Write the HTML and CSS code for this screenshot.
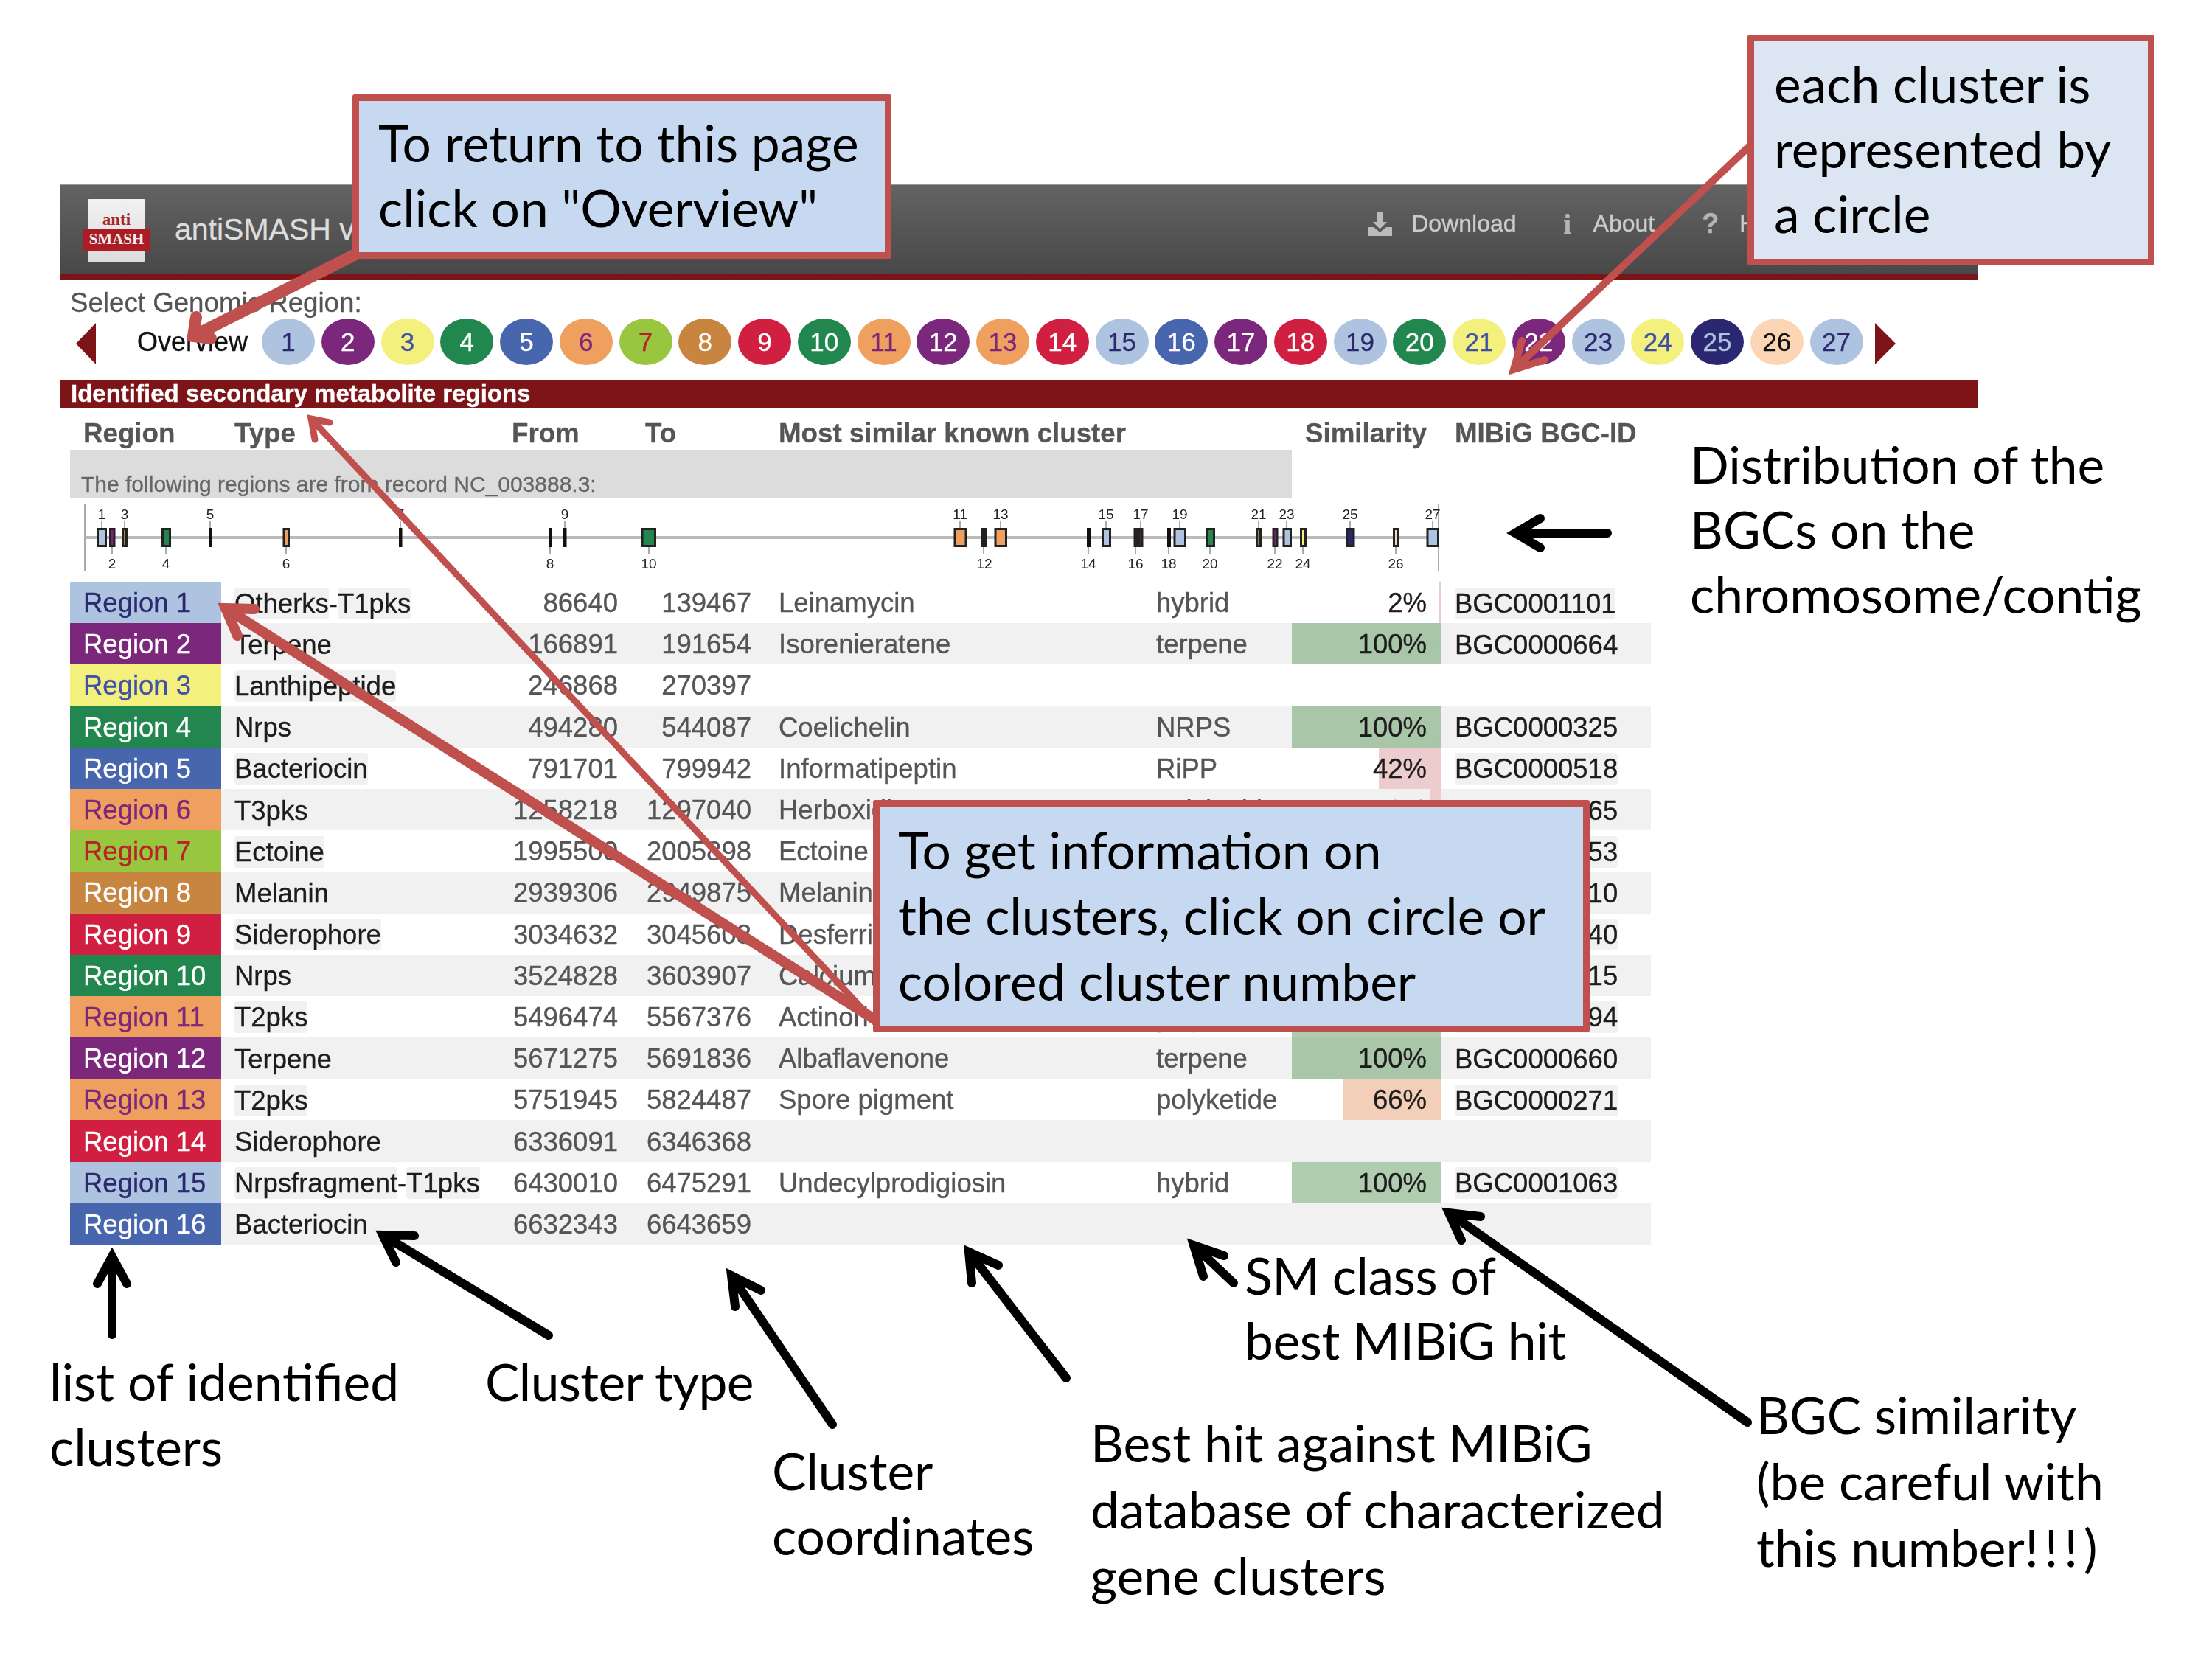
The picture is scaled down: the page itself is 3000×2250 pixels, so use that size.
FILE: index.html
```html
<!doctype html>
<html lang="en">
<head>
<title>antiSMASH overview</title>
<link rel="stylesheet" href="styles.css">
</head>
<body>
<div class="slide">

  <!-- the screenshot -->
  <div class="shot">
    <div class="navbar">
      <svg class="logo" width="92" height="86" viewBox="0 0 92 86">
        <defs>
          <linearGradient id="paper" x1="0" y1="0" x2="0" y2="1">
            <stop offset="0" stop-color="#f1f1f1"/>
            <stop offset="1" stop-color="#dcdcdc"/>
          </linearGradient>
        </defs>
        <rect x="7" y="0" width="78" height="85" rx="2" fill="url(#paper)"/>
        <rect x="0" y="40" width="92" height="30" rx="3" fill="#ad1c25"/>
        <text x="46" y="35" class="logo-anti">anti</text>
        <text x="46" y="61" class="logo-smash">SMASH</text>
      </svg>
      <div class="brand">antiSMASH v</div>
      <div class="nav-items">
        <div class="nav-item dl">
          <svg width="33" height="32" viewBox="0 0 33 32">
            <path d="M13 0h7v13h6l-9.500 9.500L7 13h6z" fill="#bbb"/>
            <path d="M0 20h8l8.500 7 8.500-7h8v12H0z" fill="#bbb"/>
          </svg>
          <span>Download</span>
        </div>
        <div class="nav-item info"><b>i</b><span>About</span></div>
        <div class="nav-item help"><b>?</b><span>Help</span></div>
      </div>
    </div>

    <div class="select-label">Select Genomic Region:</div>
    <div class="region-nav">
      <div class="arrow-left"></div>
      <div class="overview">Overview</div>
      <div class="circles">
        <a class="c-other">1</a><a class="c-terpene">2</a><a class="c-lanthi">3</a><a class="c-nrps">4</a><a class="c-bact">5</a><a class="c-pks">6</a><a class="c-ectoine">7</a><a class="c-melanin">8</a><a class="c-sidero">9</a>
        <a class="c-nrps">10</a><a class="c-pks">11</a><a class="c-terpene">12</a><a class="c-pks">13</a><a class="c-sidero">14</a><a class="c-other">15</a><a class="c-bact">16</a><a class="c-terpene">17</a><a class="c-sidero">18</a>
        <a class="c-other">19</a><a class="c-nrps">20</a><a class="c-lanthi">21</a><a class="c-terpene">22</a><a class="c-other">23</a><a class="c-lanthi">24</a><a class="c-navy">25</a><a class="c-peach">26</a><a class="c-other">27</a>
      </div>
      <div class="arrow-right"></div>
    </div>

    <div class="title-bar">Identified secondary metabolite regions</div>

    <table class="regions">
      <colgroup>
        <col class="w-region"><col class="w-type"><col class="w-from"><col class="w-to"><col class="w-name"><col class="w-class"><col class="w-sim"><col class="w-bgc">
      </colgroup>
      <thead>
        <tr><th>Region</th><th>Type</th><th>From</th><th>To</th><th colspan="2">Most similar known cluster</th><th>Similarity</th><th>MIBiG BGC-ID</th></tr>
      </thead>
      <tbody class="intro">
        <tr><td colspan="6"><div class="record">The following regions are from record NC_003888.3:</div></td><td colspan="2"></td></tr>
        <tr><td colspan="8">
          <svg class="chromo" width="1900" height="113" viewBox="95 676 1900 113">
            <line x1="115" y1="729" x2="1952" y2="729" class="axis"/>
            <line x1="115" y1="683" x2="115" y2="775" class="end"/>
            <line x1="1951" y1="683" x2="1951" y2="775" class="end"/>

            <g><line x1="138" y1="706" x2="138" y2="716"/><rect x="132.500" y="717.500" width="11" height="23" class="f-other"/><text x="138" y="704">1</text></g>
            <g><line x1="152" y1="742" x2="152" y2="752"/><rect x="149.500" y="717.500" width="5.500" height="23" class="f-terpene"/><text x="152" y="771">2</text></g>
            <g><line x1="169" y1="706" x2="169" y2="716"/><rect x="167" y="717.500" width="4.500" height="23" class="f-lanthi"/><text x="169" y="704">3</text></g>
            <g><line x1="225" y1="742" x2="225" y2="752"/><rect x="220.500" y="717.500" width="10" height="23" class="f-nrps"/><text x="225" y="771">4</text></g>
            <g><line x1="285" y1="706" x2="285" y2="716"/><rect x="283" y="716" width="4" height="26" class="f-black"/><text x="285" y="704">5</text></g>
            <g><line x1="388" y1="742" x2="388" y2="752"/><rect x="385" y="717.500" width="6.500" height="23" class="f-pks"/><text x="388" y="771">6</text></g>
            <g><line x1="543" y1="706" x2="543" y2="716"/><rect x="541" y="716" width="4.500" height="26" class="f-black"/><text x="543" y="704">7</text></g>
            <g><line x1="746" y1="742" x2="746" y2="752"/><rect x="744" y="716" width="4.500" height="26" class="f-black"/><text x="746" y="771">8</text></g>
            <g><line x1="766" y1="706" x2="766" y2="716"/><rect x="764" y="716" width="4.500" height="26" class="f-black"/><text x="766" y="704">9</text></g>
            <g><line x1="880" y1="742" x2="880" y2="752"/><rect x="871" y="717.500" width="17.500" height="23" class="f-nrps"/><text x="880" y="771">10</text></g>
            <g><line x1="1302" y1="706" x2="1302" y2="716"/><rect x="1295" y="717.500" width="15" height="23" class="f-pks"/><text x="1302" y="704">11</text></g>
            <g><line x1="1334" y1="742" x2="1334" y2="752"/><rect x="1332.500" y="717.500" width="4" height="23" class="f-terpene"/><text x="1335" y="771">12</text></g>
            <g><line x1="1357" y1="706" x2="1357" y2="716"/><rect x="1350" y="717.500" width="14.500" height="23" class="f-pks"/><text x="1357" y="704">13</text></g>
            <g><line x1="1476" y1="742" x2="1476" y2="752"/><rect x="1474" y="716" width="5" height="26" class="f-black"/><text x="1476" y="771">14</text></g>
            <g><line x1="1500" y1="706" x2="1500" y2="716"/><rect x="1495.500" y="717.500" width="10" height="23" class="f-other"/><text x="1500" y="704">15</text></g>
            <g><line x1="1540" y1="742" x2="1540" y2="752"/><rect x="1539" y="717.500" width="3" height="23" class="f-bact"/><text x="1540" y="771">16</text></g>
            <g><line x1="1547" y1="706" x2="1547" y2="716"/><rect x="1545" y="717.500" width="4" height="23" class="f-terpene"/><text x="1547" y="704">17</text></g>
            <g><line x1="1585" y1="742" x2="1585" y2="752"/><rect x="1583" y="716" width="5" height="26" class="f-black"/><text x="1585" y="771">18</text></g>
            <g><line x1="1600" y1="706" x2="1600" y2="716"/><rect x="1593" y="717.500" width="14.500" height="23" class="f-other"/><text x="1600" y="704">19</text></g>
            <g><line x1="1641" y1="742" x2="1641" y2="752"/><rect x="1637" y="717.500" width="9.500" height="23" class="f-nrps"/><text x="1641" y="771">20</text></g>
            <g><line x1="1707" y1="706" x2="1707" y2="716"/><rect x="1705" y="717.500" width="4.500" height="23" class="f-lanthi"/><text x="1707" y="704">21</text></g>
            <g><line x1="1729" y1="742" x2="1729" y2="752"/><rect x="1727" y="717.500" width="5" height="23" class="f-terpene"/><text x="1729" y="771">22</text></g>
            <g><line x1="1745" y1="706" x2="1745" y2="716"/><rect x="1741" y="717.500" width="9.500" height="23" class="f-other"/><text x="1745" y="704">23</text></g>
            <g><line x1="1767" y1="742" x2="1767" y2="752"/><rect x="1764.500" y="717.500" width="6" height="23" class="f-lanthi"/><text x="1767" y="771">24</text></g>
            <g><line x1="1831" y1="706" x2="1831" y2="716"/><rect x="1827" y="717.500" width="9" height="23" class="f-navy"/><text x="1831" y="704">25</text></g>
            <g><line x1="1893" y1="742" x2="1893" y2="752"/><rect x="1890.500" y="717.500" width="5" height="23" class="f-peach"/><text x="1893" y="771">26</text></g>
            <g><line x1="1943" y1="706" x2="1943" y2="716"/><rect x="1936" y="717.500" width="14.500" height="23" class="f-other"/><text x="1943" y="704">27</text></g>
          </svg>
        </td></tr>
      </tbody>
      <tbody class="rows">
        <tr><td class="c-other">Region 1</td><td class="type"><span class="tag">Otherks</span>-<span class="tag">T1pks</span></td><td class="num">86640</td><td class="num">139467</td><td>Leinamycin</td><td>hybrid</td><td class="sim low" style="--pct:2%">2%</td><td class="bgc"><span class="tag">BGC0001101</span></td></tr>
        <tr><td class="c-terpene">Region 2</td><td class="type"><span class="tag">Terpene</span></td><td class="num">166891</td><td class="num">191654</td><td>Isorenieratene</td><td>terpene</td><td class="sim high" style="--pct:100%">100%</td><td class="bgc"><span class="tag">BGC0000664</span></td></tr>
        <tr><td class="c-lanthi">Region 3</td><td class="type"><span class="tag">Lanthipeptide</span></td><td class="num">246868</td><td class="num">270397</td><td></td><td></td><td class="sim"></td><td class="bgc"></td></tr>
        <tr><td class="c-nrps">Region 4</td><td class="type"><span class="tag">Nrps</span></td><td class="num">494280</td><td class="num">544087</td><td>Coelichelin</td><td>NRPS</td><td class="sim high" style="--pct:100%">100%</td><td class="bgc"><span class="tag">BGC0000325</span></td></tr>
        <tr><td class="c-bact">Region 5</td><td class="type"><span class="tag">Bacteriocin</span></td><td class="num">791701</td><td class="num">799942</td><td>Informatipeptin</td><td>RiPP</td><td class="sim low" style="--pct:42%">42%</td><td class="bgc"><span class="tag">BGC0000518</span></td></tr>
        <tr><td class="c-pks">Region 6</td><td class="type"><span class="tag">T3pks</span></td><td class="num">1258218</td><td class="num">1297040</td><td>Herboxidiene</td><td>polyketide</td><td class="sim low" style="--pct:8%">8%</td><td class="bgc"><span class="tag">BGC0001065</span></td></tr>
        <tr><td class="c-ectoine">Region 7</td><td class="type"><span class="tag">Ectoine</span></td><td class="num">1995500</td><td class="num">2005898</td><td>Ectoine</td><td></td><td class="sim high" style="--pct:100%"></td><td class="bgc"><span class="tag">BGC0000853</span></td></tr>
        <tr><td class="c-melanin">Region 8</td><td class="type"><span class="tag">Melanin</span></td><td class="num">2939306</td><td class="num">2949875</td><td>Melanin</td><td></td><td class="sim high" style="--pct:100%"></td><td class="bgc"><span class="tag">BGC0000910</span></td></tr>
        <tr><td class="c-sidero">Region 9</td><td class="type"><span class="tag">Siderophore</span></td><td class="num">3034632</td><td class="num">3045608</td><td>Desferri</td><td></td><td class="sim high" style="--pct:100%"></td><td class="bgc"><span class="tag">BGC0000940</span></td></tr>
        <tr><td class="c-nrps">Region 10</td><td class="type"><span class="tag">Nrps</span></td><td class="num">3524828</td><td class="num">3603907</td><td>Calcium</td><td></td><td class="sim high" style="--pct:100%"></td><td class="bgc"><span class="tag">BGC0000315</span></td></tr>
        <tr><td class="c-pks">Region 11</td><td class="type"><span class="tag">T2pks</span></td><td class="num">5496474</td><td class="num">5567376</td><td>Actinorhodin</td><td>polyketide</td><td class="sim high" style="--pct:100%"></td><td class="bgc"><span class="tag">BGC0000194</span></td></tr>
        <tr><td class="c-terpene">Region 12</td><td class="type"><span class="tag">Terpene</span></td><td class="num">5671275</td><td class="num">5691836</td><td>Albaflavenone</td><td>terpene</td><td class="sim high" style="--pct:100%">100%</td><td class="bgc"><span class="tag">BGC0000660</span></td></tr>
        <tr><td class="c-pks">Region 13</td><td class="type"><span class="tag">T2pks</span></td><td class="num">5751945</td><td class="num">5824487</td><td>Spore pigment</td><td>polyketide</td><td class="sim mid" style="--pct:66%">66%</td><td class="bgc"><span class="tag">BGC0000271</span></td></tr>
        <tr><td class="c-sidero">Region 14</td><td class="type"><span class="tag">Siderophore</span></td><td class="num">6336091</td><td class="num">6346368</td><td></td><td></td><td class="sim"></td><td class="bgc"></td></tr>
        <tr><td class="c-other">Region 15</td><td class="type"><span class="tag">Nrpsfragment</span>-<span class="tag">T1pks</span></td><td class="num">6430010</td><td class="num">6475291</td><td>Undecylprodigiosin</td><td>hybrid</td><td class="sim high" style="--pct:100%">100%</td><td class="bgc"><span class="tag">BGC0001063</span></td></tr>
        <tr><td class="c-bact">Region 16</td><td class="type"><span class="tag">Bacteriocin</span></td><td class="num">6632343</td><td class="num">6643659</td><td></td><td></td><td class="sim"></td><td class="bgc"></td></tr>
      </tbody>
    </table>
  </div>

  <!-- arrows drawn over the screenshot -->
  <svg class="arrows" width="3000" height="2250" viewBox="0 0 3000 2250">
    <g class="ar-black">
      <path d="M2180 723H2055M2089 703L2055 723L2089 743"/>
      <path d="M152 1810V1704M132 1741L152 1704L172 1741"/>
      <path d="M744 1811L519 1675M562 1676L519 1675L537 1712"/>
      <path d="M1129 1932L992 1730M1032 1750L992 1730L997 1772"/>
      <path d="M1446 1869L1314 1698M1354 1716L1314 1698L1318 1740"/>
      <path d="M1673 1740L1619 1689M1660 1703L1619 1689L1632 1731"/>
      <path d="M2370 1929L1965 1645M2008 1650L1965 1645L1982 1682"/>
    </g>
    <g class="ar-red">
      <path class="w16" d="M480 346L262 456M286 459L262 456L266 430"/>
      <path class="w10" d="M2375 196L2053 501M2095 488L2053 501L2064 462"/>
      <path class="w9" d="M1190 1390L422 568M447 573L422 568L427 596"/>
      <path class="w14" d="M1190 1385L306 825M345 826L306 825L322 862"/>
    </g>
  </svg>

  <div class="callout c1">To return to this page<br>click on "Overview"</div>
  <div class="callout c2">each cluster is<br>represented by<br>a circle</div>
  <div class="callout c3">To get information on<br>the clusters, click on circle or<br>colored cluster number</div>

  <div class="note n-dist">Distribution of the<br>BGCs on the<br>chromosome/contig</div>
  <div class="note n-list">list of identified<br>clusters</div>
  <div class="note n-type">Cluster type</div>
  <div class="note n-coord">Cluster<br>coordinates</div>
  <div class="note n-best">Best hit against MIBiG<br>database of characterized<br>gene clusters</div>
  <div class="note n-class">SM class of<br>best MIBiG hit</div>
  <div class="note n-sim">BGC similarity<br>(be careful with<br>this number<span class="bangs">!!!</span>)</div>
</div>
</body>
</html>
```

FILE: styles.css
```css
BODY {
    margin: 0;
    background: #fff;
}
.slide {
    position: relative;
    width: 3000px;
    height: 2250px;
    overflow: hidden;
}

/* screenshot */
.shot {
    box-sizing: border-box;
    width: 2682px;
    padding: 250px 0 0 82px;
    font-family: "Liberation Sans", Arial, sans-serif;
    font-size: 36.5px;
    color: #555;
    filter: blur(0.6px);
    -webkit-text-stroke: 0.35px;
}
.navbar {
    box-sizing: border-box;
    height: 130px;
    display: flex;
    align-items: center;
    padding: 2px 0 0 30px;
    border-top: 1px solid #999;
    border-bottom: 8px solid #7d1518;
    background: linear-gradient(#636363, #484848);
}
.logo {
    flex: none;
}
.logo-anti {
    font: bold 23px "Liberation Serif", serif;
    fill: #a5252c;
    text-anchor: middle;
}
.logo-smash {
    font: bold 21px "Liberation Serif", serif;
    fill: #eee;
    text-anchor: middle;
}
.brand {
    margin: 0 0 3px 33px;
    font-size: 41px;
    color: #ddd;
}
.nav-items {
    margin-left: auto;
    margin-right: 257px;
    padding-bottom: 18px;
    display: flex;
    align-items: center;
    gap: 64px;
    font-size: 32px;
    color: #ccc;
}
.nav-item {
    display: flex;
    align-items: center;
}
.nav-item B {
    font: bold 38px "Liberation Serif", serif;
    color: #b4b4b4;
}
.dl SVG { margin-right: 26px; }
.info B { width: 13px; margin-right: 27px; }
.help B { width: 22px; margin-right: 29px; font-family: "Liberation Sans", sans-serif; }

.select-label {
    margin: 11px 0 0 13px;
    line-height: 40px;
    font-size: 36.7px;
}
.region-nav {
    display: flex;
    align-items: center;
    height: 63px;
    margin-top: 1px;
    padding-left: 21px;
}
.arrow-left {
    margin: 5px 56px 0 0;
    border-style: solid;
    border-width: 28px 27px 28px 0;
    border-color: transparent #7d1518 transparent transparent;
}
.arrow-right {
    margin: 5px 0 0 16px;
    border-style: solid;
    border-width: 28px 0 28px 28px;
    border-color: transparent transparent transparent #7d1518;
}
.overview {
    width: 151px;
    margin-right: 18px;
    font-size: 36px;
    color: #111;
}
.circles {
    display: flex;
    gap: 8.75px;
}
.circles A {
    width: 72px;
    height: 63px;
    border-radius: 50%;
    display: flex;
    align-items: center;
    justify-content: center;
    font-size: 35px;
}

/* cluster type colours, circles and region cells */
.c-other { background: #aec3df; color: #2b2a6e; }
.c-terpene { background: #7b287c; color: #fff; }
.c-lanthi { background: #f3f07e; color: #3f51a8; }
.c-nrps { background: #22874f; color: #fff; }
.c-bact { background: #4866ae; color: #fff; }
.c-pks { background: #ef9f5e; color: #7b287c; }
.c-ectoine { background: #98c63f; color: #b8232b; }
.c-melanin { background: #c88540; color: #fff; }
.c-sidero { background: #d11f41; color: #fff; }
.c-navy { background: #2b2770; color: #aec3df; }
.c-peach { background: #fcd5b5; color: #111; }

.title-bar {
    margin-top: 21px;
    height: 37px;
    padding-left: 14px;
    background: #7d1518;
    color: #fff;
    font-size: 33px;
    font-weight: bold;
    line-height: 36px;
}

/* table */
.regions {
    margin-left: 13px;
    width: 2144px;
    table-layout: fixed;
    border-collapse: collapse;
}
.w-region { width: 205px; }
.w-type { width: 376px; }
.w-from { width: 181px; }
.w-to { width: 181px; }
.w-name { width: 512px; }
.w-class { width: 202px; }
.w-sim { width: 203px; }
.w-bgc { width: 284px; }
.regions TH {
    height: 57px;
    padding: 12px 0 0 18px;
    text-align: left;
    font-size: 36.7px;
    white-space: nowrap;
    box-sizing: border-box;
}
.regions TD {
    padding: 0;
}
.rows TD {
    height: 56.2px;
    padding: 2px 0 0 18px;
    box-sizing: border-box;
    white-space: nowrap;
}
.rows TR:nth-child(even) {
    background: #f1f1f1;
}
.rows .type,
.rows .sim,
.rows .bgc {
    color: #1c1c1c;
}
.rows .num {
    text-align: right;
    padding: 2px 19px 0 0;
}
.rows .sim {
    text-align: right;
    padding: 2px 20px 0 0;
}
.rows .high { --c: rgba(97, 155, 97, 0.5); }
.rows .mid { --c: #f3ceb9; }
.rows .low { --c: #eccccc; }
.rows .high,
.rows .mid,
.rows .low {
    background-image: linear-gradient(var(--c), var(--c));
    background-repeat: no-repeat;
    background-position: right;
    background-size: var(--pct) 100%;
}
.tag {
    display: inline-block;
    line-height: 43px;
    border-radius: 4px;
    background: #f1f1f1;
}
.record {
    box-sizing: border-box;
    height: 66px;
    padding: 27px 0 0 15px;
    background: #dcdcdc;
    font-size: 30px;
    line-height: 40px;
    color: #666;
}

/* chromosome map */
.chromo {
    display: block;
}
.axis {
    stroke: #bbb;
    stroke-width: 4;
}
.end {
    stroke: #aaa;
    stroke-width: 2;
}
.chromo G LINE {
    stroke: #aaa;
    stroke-width: 2;
}
.chromo TEXT {
    font-size: 19px;
    fill: #222;
    text-anchor: middle;
}
.chromo RECT {
    stroke: #222;
    stroke-width: 3;
}
.chromo .f-black { fill: #111; stroke: none; }
.f-other { fill: #aec3df; }
.f-terpene { fill: #7b287c; }
.f-lanthi { fill: #f3f07e; }
.f-nrps { fill: #22874f; }
.f-bact { fill: #4866ae; }
.f-pks { fill: #ef9f5e; }
.f-navy { fill: #2b2770; }
.f-peach { fill: #fcd5b5; }

/* annotations */
.arrows {
    position: absolute;
    left: 0;
    top: 0;
    pointer-events: none;
}
.arrows PATH {
    fill: none;
    stroke-linejoin: miter;
    stroke-miterlimit: 12;
    stroke-linecap: round;
}
.ar-black PATH {
    stroke: #000;
    stroke-width: 12;
}
.ar-red PATH {
    stroke: #c0504d;
}
.w16 { stroke-width: 16; }
.w14 { stroke-width: 14; }
.w10 { stroke-width: 10; }
.w9 { stroke-width: 9; }

.callout,
.note {
    position: absolute;
    font-family: Lato, "Open Sans", sans-serif;
    font-size: 69.5px;
    line-height: 88px;
    color: #000;
    white-space: nowrap;
}
.callout {
    box-sizing: border-box;
    border: 9px solid #c0504d;
    border-radius: 3px;
    background: #c6d9f0;
}
.c1 { left: 478px; top: 128px; width: 731px; height: 223px; padding: 12px 0 0 26px; }
.c2 { left: 2370px; top: 47px; width: 552px; height: 313px; padding: 13px 0 0 27px; background: #dce6f2; }
.c3 { left: 1184px; top: 1085px; width: 972px; height: 315px; padding: 14px 0 0 25px; line-height: 89px; }

.n-dist { left: 2292px; top: 585px; }
.n-list { left: 67px; top: 1829px; }
.n-type { left: 658px; top: 1829px; letter-spacing: -0.6px; }
.n-coord { left: 1047px; top: 1950px; }
.n-best { left: 1479px; top: 1911px; line-height: 90px; }
.n-class { left: 1688px; top: 1685px; letter-spacing: -0.4px; }
.n-sim { left: 2382px; top: 1873px; line-height: 90px; }
.bangs { letter-spacing: 8px; }
```
